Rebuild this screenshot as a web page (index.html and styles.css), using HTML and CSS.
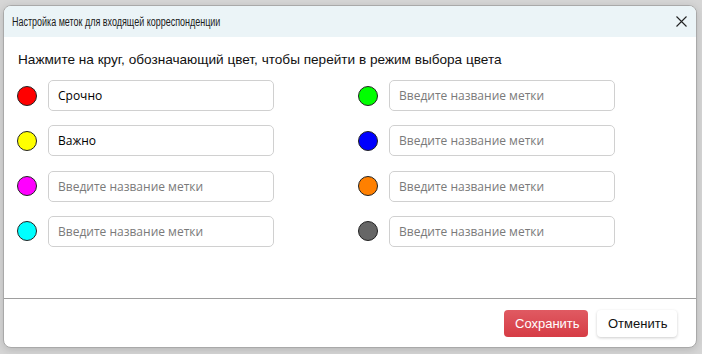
FILE: index.html
```html
<!DOCTYPE html>
<html lang="ru">
<head>
    <meta charset="UTF-8">
    <meta name="viewport" content="width=device-width, initial-scale=1.0">
    <title>Настройка меток</title>
    <link rel="stylesheet" href="styles.css">
</head>
<body>
    <div class="dialog">
        <div class="dialog-header">
            <span class="dialog-title">Настройка меток для входящей корреспонденции</span>
            <button class="close-btn" aria-label="Закрыть">
                <svg width="11" height="11" viewBox="0 0 11 11">
                    <path d="M0.5 0.5 L10.5 10.5 M10.5 0.5 L0.5 10.5" stroke="#222" stroke-width="1.1" fill="none"/>
                </svg>
            </button>
        </div>
        <div class="dialog-body">
            <p class="hint">Нажмите на круг, обозначающий цвет, чтобы перейти в режим выбора цвета</p>
            <div class="labels-grid">
                <div class="label-row">
                    <span class="color-dot red"></span>
                    <input class="label-input" type="text" value="Срочно" placeholder="Введите название метки">
                </div>
                <div class="label-row">
                    <span class="color-dot green"></span>
                    <input class="label-input" type="text" placeholder="Введите название метки">
                </div>
                <div class="label-row">
                    <span class="color-dot yellow"></span>
                    <input class="label-input" type="text" value="Важно" placeholder="Введите название метки">
                </div>
                <div class="label-row">
                    <span class="color-dot blue"></span>
                    <input class="label-input" type="text" placeholder="Введите название метки">
                </div>
                <div class="label-row">
                    <span class="color-dot magenta"></span>
                    <input class="label-input" type="text" placeholder="Введите название метки">
                </div>
                <div class="label-row">
                    <span class="color-dot orange"></span>
                    <input class="label-input" type="text" placeholder="Введите название метки">
                </div>
                <div class="label-row">
                    <span class="color-dot cyan"></span>
                    <input class="label-input" type="text" placeholder="Введите название метки">
                </div>
                <div class="label-row">
                    <span class="color-dot gray"></span>
                    <input class="label-input" type="text" placeholder="Введите название метки">
                </div>
            </div>
        </div>
        <div class="dialog-footer">
            <button class="btn btn-save">Сохранить</button>
            <button class="btn btn-cancel">Отменить</button>
        </div>
    </div>
</body>
</html>
```

FILE: styles.css
```css
body {
    margin: 0;
    padding: 5px 5px 6px 3px;
    background: #d6d6d6;
    font-family: 'Liberation Sans', Arial, sans-serif;
}
.dialog {
    width: 694px;
    height: 343px;
    box-sizing: border-box;
    background: white;
    border: 1px solid #a9a9a9;
    border-radius: 8px;
    box-shadow: 0 2px 8px rgba(0, 0, 0, 0.15);
    display: flex;
    flex-direction: column;
    overflow: hidden;
}
.dialog-header {
    height: 31px;
    flex-shrink: 0;
    background: #ebf4f7;
    display: flex;
    align-items: center;
    justify-content: space-between;
    padding: 0 9px 0 8px;
}
.dialog-title {
    display: inline-block;
    font-size: 12.3px;
    color: #1a1a1a;
    transform: scaleX(0.73);
    transform-origin: left center;
}
.close-btn {
    border: none;
    background: none;
    padding: 0;
    width: 11px;
    height: 11px;
    display: flex;
    cursor: pointer;
}
.dialog-body {
    flex: 1;
    padding: 15px 0 0 13px;
    border-bottom: 1px solid #9e9e9e;
}
.hint {
    margin: 0 0 13px 1px;
    font-size: 13.6px;
    color: #111;
}
.labels-grid {
    display: grid;
    grid-template-columns: 341px 341px;
    row-gap: 14.3px;
}
.label-row {
    display: flex;
    align-items: center;
    gap: 11px;
}
.color-dot {
    width: 18px;
    height: 18px;
    border: 1px solid #222;
    border-radius: 50%;
    flex-shrink: 0;
    cursor: pointer;
}
.red { background: #ff0000; }
.green { background: #00ff00; }
.yellow { background: #ffff00; }
.blue { background: #0000ff; }
.magenta { background: #ff00ff; }
.orange { background: #ff8000; }
.cyan { background: #00ffff; }
.gray { background: #666666; }
.label-input {
    width: 226px;
    height: 31px;
    box-sizing: border-box;
    padding: 0 9px;
    border: 1px solid #d0d0d0;
    border-radius: 5px;
    font-family: 'Open Sans', sans-serif;
    font-size: 12px;
    color: #000;
    outline: none;
}
.label-input::placeholder {
    color: #7a7a7a;
}
.dialog-footer {
    height: 48px;
    flex-shrink: 0;
    display: flex;
    align-items: center;
    justify-content: flex-end;
    gap: 9px;
    padding: 0 19px 0 0;
}
.btn {
    height: 27px;
    padding: 0 11px;
    border: none;
    border-radius: 4px;
    font-family: 'Liberation Sans', Arial, sans-serif;
    font-size: 13px;
    cursor: pointer;
}
.btn-save {
    background: linear-gradient(#e05a62, #d63c45);
    color: white;
    width: 84px;
}
.btn-cancel {
    background: white;
    color: #111;
    width: 80px;
    box-shadow: 0 1px 3px rgba(0, 0, 0, 0.2);
}
```
